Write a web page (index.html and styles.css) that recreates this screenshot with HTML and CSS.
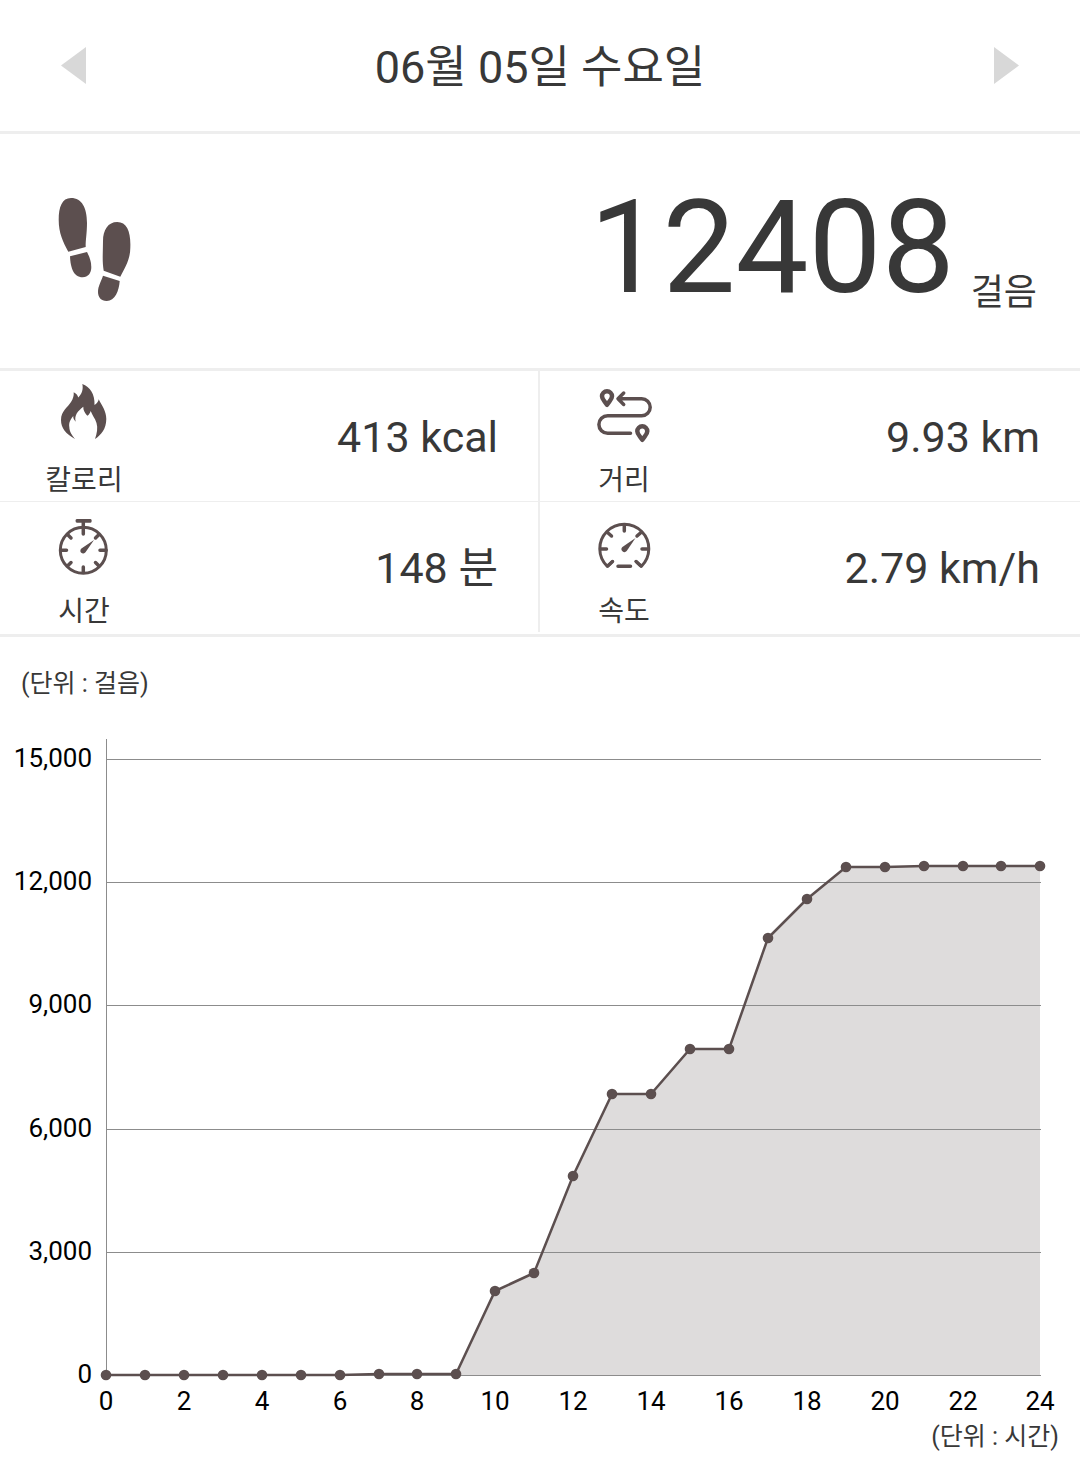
FILE: index.html
```
<!DOCTYPE html>
<html lang="ko">
<head>
    <meta charset="UTF-8">
    <meta name="viewport" content="width=device-width, initial-scale=1">
    <title>걸음</title>
    <link rel="stylesheet" href="styles.css">
</head>
<body>
<header class="date-bar">
    <button class="nav" type="button" aria-label="이전">
        <svg width="25" height="37" viewBox="0 0 25 37"><path d="M25 0V37L0 18.500Z"/></svg>
    </button>
    <h1 class="date">06월 05일 수요일</h1>
    <button class="nav" type="button" aria-label="다음">
        <svg width="25" height="37" viewBox="0 0 25 37"><path d="M0 0V37L25 18.500Z"/></svg>
    </button>
</header>

<main>
    <section class="summary">
        <svg class="foot" width="80" height="112" viewBox="0 0 80 112">
            <path d="M17 4C8 4 4.700 13 4.700 26C4.700 39 9 48 14.300 57.700L31.700 53C31.500 46 33 39 33 29C33 14 28 4 17 4Z"/>
            <path d="M16 62.300L33 58C35 62 37.300 67 37.300 73C37.300 79 34 83.300 28.700 83.300C19 83.300 16.500 73 16 62.300Z"/>
            <path d="M63.300 28C54 28 49 36 49 47C49 58 48 67 49.700 76.700L66.300 82.700C71 74 76.300 65 76.300 54C77 38 73 28 63.300 28Z"/>
            <path d="M49 81.700L65.700 87C65 97 61 107 52.700 107C47 107 44 103 44 98C44 92 47 88 49 81.700Z"/>
        </svg>
        <p class="steps">
            <strong class="count">12408</strong>
            <span class="count-unit">걸음</span>
        </p>
    </section>

    <section class="stats">
        <div class="stat">
            <div class="kind">
                <svg width="64" height="64" viewBox="0 0 64 64">
                    <path class="solid" d="M30.300 4C38 7 43 14 42.500 25C45 23.500 46.500 21.500 46.700 19.300C50 26 54.300 31 54.300 39C54.300 49 49 55 43 59C45 53 46 48 44.500 43C43 38 40 35 38.700 31C38 33 37 35 35.300 35.700C33 33 31 30 31.300 26.700C26 31 22 35 23.700 41.700C22 40 21 38 21.300 36C17 41 17 44 17.300 47C17.500 52 20 55 23 59C14 54 9 48 9 40C9 31 16 27 19 22C21 19 22 16 21.700 12.300C24 13.500 25.500 15 26.300 17.500C30 14 31.500 9 30.300 4Z"/>
                </svg>
                <span class="label">칼로리</span>
            </div>
            <span class="value">413 kcal</span>
        </div>
        <div class="stat">
            <div class="kind">
                <svg width="64" height="64" viewBox="0 0 64 64">
                    <path class="pin" d="M15 24.800C12.500 21 10 19.500 10 16.300A5 5 0 0 1 20 16.300C20 19.500 17.500 21 15 24.800Z"/>
                    <path class="pin" d="M50.300 59.800C47.800 56 45.300 54.500 45.300 51.300A5 5 0 0 1 55.300 51.300C55.300 54.500 52.800 56 50.300 59.800Z"/>
                    <path class="stroke" d="M31.700 13L26 18.700L31.700 24.400M27 18.700H49.700A8.500 8.500 0 0 1 49.700 35.700H15.700A8.800 8.800 0 0 0 15.700 53.300H38.500"/>
                </svg>
                <span class="label">거리</span>
            </div>
            <span class="value">9.93 km</span>
        </div>
        <div class="stat">
            <div class="kind">
                <svg width="64" height="64" viewBox="0 0 64 64">
                    <circle class="ring" cx="31.300" cy="39.300" r="23"/>
                    <path class="solid" d="M25 8H38.500Q39.700 8 39.700 9.800T38.500 11.700H25Q23.500 11.700 23.500 9.800T25 8Z"/>
                    <path class="stroke" d="M31.300 11V23M9 39.300H14.500M48 39.300H54M31.300 56V61M16 24L19 27M46.500 24L43.500 27M16 54.500L19 51.500M46.500 54.500L43.500 51.500"/>
                    <path class="solid" d="M42 29L29.400 37.600A2.800 2.800 0 1 0 33.500 41.300Z"/>
                </svg>
                <span class="label">시간</span>
            </div>
            <span class="value">148 분</span>
        </div>
        <div class="stat">
            <div class="kind">
                <svg width="64" height="64" viewBox="0 0 64 64">
                    <path class="ring" d="M20.500 50.500L15.300 55.300A24.500 24.500 0 1 1 49.300 55.300L44.100 50.500"/>
                    <path class="stroke" d="M9 38H14.500M50 38H56M32.300 14V20M15.500 21.500L19.500 25M49 21.500L45 25M20.500 50.500L16 54.700M44.100 50.500L48.700 54.700M26 55.200H38.500"/>
                    <path class="solid" d="M43.500 27L30.400 35.900A3 3 0 1 0 34.700 40.100Z"/>
                </svg>
                <span class="label">속도</span>
            </div>
            <span class="value">2.79 km/h</span>
        </div>
    </section>

    <section class="chart">
        <p class="unit">(단위 : 걸음)</p>
        <svg class="graph" viewBox="0 0 1080 717">
            <defs>
                <marker id="dot" markerUnits="userSpaceOnUse" markerWidth="12" markerHeight="12" refX="6" refY="6">
                    <circle class="dot" cx="6" cy="6" r="5.300"/>
                </marker>
            </defs>
            <!-- steps by hour -->
            <path class="area" d="M106 675L340 675L379 674L456 674L495 591L534 573L573 476L612 394H651L690 349H729L768 238L807 199L846 167H885L924 166H1040V675Z"/>
            <!-- grid -->
            <path class="grid" d="M106.500 39V675.500M106 59.500H1041M106 182.500H1041M106 305.500H1041M106 429.500H1041M106 552.500H1041M106 675.500H1041"/>
            <polyline class="line" points="106,675 145,675 184,675 223,675 262,675 301,675 340,675 379,674 417,674 456,674 495,591 534,573 573,476 612,394 651,394 690,349 729,349 768,238 807,199 846,167 885,167 924,166 963,166 1001,166 1040,166"/>
            <g class="y-axis">
                <text x="92" y="67">15,000</text>
                <text x="92" y="190">12,000</text>
                <text x="92" y="313">9,000</text>
                <text x="92" y="437">6,000</text>
                <text x="92" y="560">3,000</text>
                <text x="92" y="683">0</text>
            </g>
            <g class="x-axis">
                <text x="106" y="710">0</text>
                <text x="184" y="710">2</text>
                <text x="262" y="710">4</text>
                <text x="340" y="710">6</text>
                <text x="417" y="710">8</text>
                <text x="495" y="710">10</text>
                <text x="573" y="710">12</text>
                <text x="651" y="710">14</text>
                <text x="729" y="710">16</text>
                <text x="807" y="710">18</text>
                <text x="885" y="710">20</text>
                <text x="963" y="710">22</text>
                <text x="1040" y="710">24</text>
            </g>
        </svg>
        <p class="unit unit-hour">(단위 : 시간)</p>
    </section>
</main>
</body>
</html>
```
FILE: styles.css
```
*{
    box-sizing: border-box;
    padding: 0;
    margin: 0;
}
body{
    background: #fff;
    color: #383838;
    font-family: Roboto, "Noto Sans CJK KR", sans-serif;
}
svg{
    display: block;
}

.date-bar{
    display: flex;
    justify-content: space-between;
    align-items: center;
    padding: 31px 44px 30px;
    border-bottom: 3px solid #eee;
}
.date{
    padding-top: 4px;
    font-size: 45px;
    font-weight: normal;
    line-height: 66px;
}
.nav{
    padding: 16px 17px 17px;
    border: none;
    background: none;
    cursor: pointer;
}
.nav svg{
    fill: #d8d8d8;
}

.summary{
    display: flex;
    justify-content: space-between;
    align-items: flex-start;
    padding: 45px 43px 51px 54px;
    border-bottom: 3px solid #eee;
}
.foot{
    margin-top: 15px;
    fill: #5c4f4f;
}
.steps{
    display: flex;
    align-items: flex-end;
    gap: 16px;
}
.count{
    font-size: 130px;
    font-weight: normal;
    line-height: 138px;
}
.count-unit{
    font-size: 36px;
    line-height: 48px;
}

.stats{
    display: grid;
    grid-template-columns: 1fr 1fr;
    padding-bottom: 2px;
    border-bottom: 3px solid #eee;
}
.stat{
    display: flex;
    justify-content: space-between;
    align-items: center;
    padding-right: 40px;
}
.stat:nth-child(odd){
    border-right: 2px solid #eee;
}
.stat:nth-child(-n+2){
    border-bottom: 1px solid #eee;
}
.kind{
    display: flex;
    flex-direction: column;
    align-items: center;
    width: 168px;
    padding-top: 9px;
    gap: 17px;
}
.label{
    font-size: 28px;
    line-height: 40px;
}
.value{
    padding-top: 2px;
    font-size: 43px;
    line-height: 52px;
}
.solid,
.dot{
    fill: #5c4f4f;
}
.stroke,
.ring,
.pin{
    fill: none;
    stroke: #5c4f4f;
    stroke-width: 3;
    stroke-linecap: round;
    stroke-linejoin: round;
}
.stroke{
    stroke-width: 3.5;
}
.pin{
    stroke-width: 4.5;
}

.chart{
    padding: 27px 0 30px;
}
.unit{
    padding: 4px 21px 0;
    font-size: 25px;
    line-height: 32px;
}
.unit-hour{
    text-align: right;
}
.graph{
    width: 100%;
    height: auto;
}
.grid{
    fill: none;
    stroke: #8c8c8c;
    stroke-width: 1;
}
.area{
    fill: #5c4f4f;
    fill-opacity: 0.2;
}
.line{
    fill: none;
    stroke: #5c4f4f;
    stroke-width: 2.5;
    marker: url(#dot);
}
.graph text{
    fill: #000;
    font-size: 26px;
}
.y-axis{
    text-anchor: end;
}
.x-axis{
    text-anchor: middle;
}
```
